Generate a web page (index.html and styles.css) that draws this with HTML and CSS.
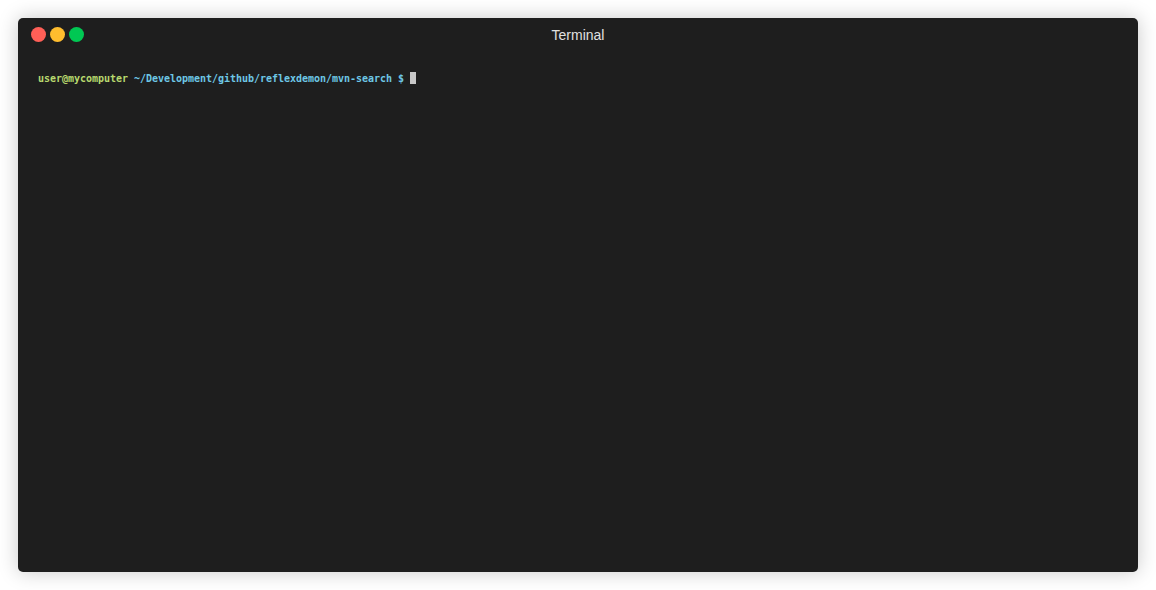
FILE: index.html
```html
<!DOCTYPE html>
<html>
<head>
<meta charset="utf-8">
<link rel="stylesheet" href="styles.css">
</head>
<body>
<div class="window">
  <div class="titlebar">
    <div class="lights">
      <span class="light red"></span>
      <span class="light yellow"></span>
      <span class="light green"></span>
    </div>
    <div class="title">Terminal</div>
  </div>
  <div class="body">
    <div class="line"><span class="user">user@mycomputer</span> <span class="path">~/Development/github/reflexdemon/mvn-search $</span> <span class="cursor"></span></div>
  </div>
</div>
</body>
</html>
```
FILE: styles.css
```css
html, body {
  margin: 0;
  padding: 0;
  background: #ffffff;
}
body {
  padding: 18px;
  width: 1120px;
}
.window {
  width: 1120px;
  height: 554px;
  background: #1e1e1e;
  border-radius: 5px;
  box-shadow: 0 0 20px rgba(0, 0, 0, 0.22);
  display: flex;
  flex-direction: column;
}
.titlebar {
  height: 32px;
  display: flex;
  align-items: center;
  position: relative;
  padding-left: 13px;
}
.lights {
  display: flex;
  gap: 4px;
}
.light {
  width: 15px;
  height: 15px;
  border-radius: 50%;
  display: block;
}
.red { background: #ff5f57; }
.yellow { background: #ffbd2e; }
.green { background: #00c853; }
.title {
  position: absolute;
  left: 0;
  right: 0;
  top: 1px;
  line-height: 33px;
  text-align: center;
  font-family: "Liberation Sans", Arial, sans-serif;
  font-size: 14px;
  color: #e0e0e0;
  pointer-events: none;
}
.body {
  padding: 22px 20px;
}
.line {
  font-family: "DejaVu Sans Mono", monospace;
  font-weight: bold;
  font-size: 10px;
  line-height: 14px;
  letter-spacing: -0.02px;
  white-space: pre;
}
.user { color: #b8d96e; }
.path { color: #6ec8e6; }
.cursor {
  display: inline-block;
  width: 6px;
  height: 12px;
  background: #c8c8c8;
  vertical-align: -2px;
}
```
